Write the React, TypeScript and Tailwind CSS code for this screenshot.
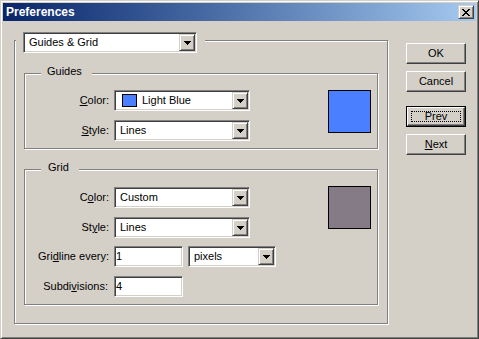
import React from "react";

const raised =
  "border border-t-white border-l-white border-r-[#404040] border-b-[#404040] shadow-[inset_-1px_-1px_0_#808080] bg-[#d4d0c8]";
const scrollBtn =
  "border border-t-[#d4d0c8] border-l-[#d4d0c8] border-r-[#404040] border-b-[#404040] shadow-[inset_1px_1px_0_#fff,inset_-1px_-1px_0_#808080] bg-[#d4d0c8]";
const sunken =
  "border border-t-[#808080] border-l-[#808080] border-r-white border-b-white shadow-[inset_1px_1px_0_#404040,inset_-1px_-1px_0_#d4d0c8] bg-white";
const etched = "border border-[#808080] shadow-[inset_1px_1px_0_#fff,1px_1px_0_#fff]";

const Arrow = () => (
  <svg width="7" height="4" viewBox="0 0 7 4" shapeRendering="crispEdges">
    <rect x="0" y="0" width="7" height="1" />
    <rect x="1" y="1" width="5" height="1" />
    <rect x="2" y="2" width="3" height="1" />
    <rect x="3" y="3" width="1" height="1" />
  </svg>
);

const CloseGlyph = () => (
  <svg width="8" height="7" viewBox="0 0 8 7" shapeRendering="crispEdges">
    <rect x="0" y="0" width="2" height="1" />
    <rect x="6" y="0" width="2" height="1" />
    <rect x="1" y="1" width="2" height="1" />
    <rect x="5" y="1" width="2" height="1" />
    <rect x="2" y="2" width="4" height="1" />
    <rect x="3" y="3" width="2" height="1" />
    <rect x="2" y="4" width="4" height="1" />
    <rect x="1" y="5" width="2" height="1" />
    <rect x="5" y="5" width="2" height="1" />
    <rect x="0" y="6" width="2" height="1" />
    <rect x="6" y="6" width="2" height="1" />
  </svg>
);

function Combo({ className, children }: { className: string; children: React.ReactNode }) {
  return (
    <div className={`${sunken} ${className} h-[21px] flex items-center pl-[5px] pr-[1px]`}>
      <div className="flex-1 flex items-center whitespace-nowrap">{children}</div>
      <div className={`${scrollBtn} w-[16px] h-[17px] flex items-center justify-center`}>
        <Arrow />
      </div>
    </div>
  );
}

function Field({ value }: { value: string }) {
  return (
    <div className={`${sunken} w-[69px] h-[21px] flex items-center pl-[1px]`}>{value}</div>
  );
}

function Row({ label, children }: { label: React.ReactNode; children: React.ReactNode }) {
  return (
    <div className="flex items-center h-[21px]">
      <div className="w-[84px] text-right whitespace-nowrap">{label}</div>
      <div className="ml-[5px] flex items-center gap-[5px]">{children}</div>
    </div>
  );
}

function Button({ children, isDefault }: { children: React.ReactNode; isDefault?: boolean }) {
  if (isDefault) {
    return (
      <div className="w-[60px] h-[21px] border border-black">
        <div className={`${raised} relative w-full h-full flex items-center justify-center`}>
          <span className="absolute inset-[3px] border border-dotted border-black" />
          {children}
        </div>
      </div>
    );
  }
  return (
    <div className={`${raised} w-[60px] h-[21px] flex items-center justify-center`}>{children}</div>
  );
}

const App: React.FC = () => {
  return (
    <div className="w-[479px] h-[339px] bg-[#d4d0c8] border border-t-[#d4d0c8] border-l-[#d4d0c8] border-r-[#404040] border-b-[#404040] shadow-[inset_1px_1px_0_#fff,inset_-1px_-1px_0_#808080] p-[2px] flex flex-col font-['Liberation_Sans',Arial,sans-serif] text-[11px] leading-[13px] text-black">
      {/* title bar */}
      <div className="h-[18px] flex items-center bg-linear-to-r from-[#0a246a] to-[#a6caf0]">
        <span className="pl-[3px] pb-[1px] text-white font-bold text-[12px] leading-[14px]">Preferences</span>
        <div className={`${scrollBtn} ml-auto mr-[2px] w-[16px] h-[14px] flex items-center justify-center`}>
          <CloseGlyph />
        </div>
      </div>

      <div className="flex-1 flex pl-[11px] pt-[19px]">
        {/* outer group */}
        <div className={`${etched} relative w-[374px] h-[284px] pt-[32px] px-[9px]`}>
          <div className="absolute left-[1px] top-[-9px] pl-[7px] pr-[8px] bg-[#d4d0c8]">
            <Combo className="w-[174px]">Guides &amp; Grid</Combo>
          </div>

          {/* Guides */}
          <div className={`${etched} relative h-[76px] pt-[16px] pr-[6px] flex`}>
            <span className="absolute left-[16px] top-[-9px] pl-[6px] pr-[10px] bg-[#d4d0c8]">Guides</span>
            <div className="flex flex-col gap-[9px]">
              <Row label={<><u>C</u>olor:</>}>
                <Combo className="w-[136px]">
                  <span className="ml-[2px] w-[15px] h-[13px] border border-black bg-[#4a80ff]" />
                  <span className="ml-[5px]">Light Blue</span>
                </Combo>
              </Row>
              <Row label={<><u>S</u>tyle:</>}>
                <Combo className="w-[136px]">Lines</Combo>
              </Row>
            </div>
            <div className="ml-auto w-[43px] h-[43px] border border-black bg-[#4a80ff]" />
          </div>

          {/* Grid */}
          <div className={`${etched} relative mt-[20px] h-[136px] pt-[17px] pr-[6px] flex`}>
            <span className="absolute left-[16px] top-[-9px] pl-[7px] pr-[10px] bg-[#d4d0c8]">Grid</span>
            <div className="flex flex-col">
              <Row label={<>C<u>o</u>lor:</>}>
                <Combo className="w-[136px]">Custom</Combo>
              </Row>
              <div className="mt-[9px]">
                <Row label={<>St<u>y</u>le:</>}>
                  <Combo className="w-[136px]">Lines</Combo>
                </Row>
              </div>
              <div className="mt-[8px]">
                <Row label={<>Gri<u>d</u>line every:</>}>
                  <Field value="1" />
                  <Combo className="w-[88px]">pixels</Combo>
                </Row>
              </div>
              <div className="mt-[9px]">
                <Row label={<span className="pr-[1px]">Subdi<u>v</u>isions:</span>}>
                  <Field value="4" />
                </Row>
              </div>
            </div>
            <div className="ml-auto mt-[-1px] w-[43px] h-[43px] border border-black bg-[#857b87]" />
          </div>
        </div>

        {/* buttons */}
        <div className="ml-[18px] mt-[3px] flex flex-col">
          <Button>OK</Button>
          <div className="mt-[7px]">
            <Button>Cancel</Button>
          </div>
          <div className="mt-[14px]">
            <Button isDefault>Prev</Button>
          </div>
          <div className="mt-[7px]">
            <Button>
              <span>
                <u>N</u>ext
              </span>
            </Button>
          </div>
        </div>
      </div>
    </div>
  );
};

export default App;
